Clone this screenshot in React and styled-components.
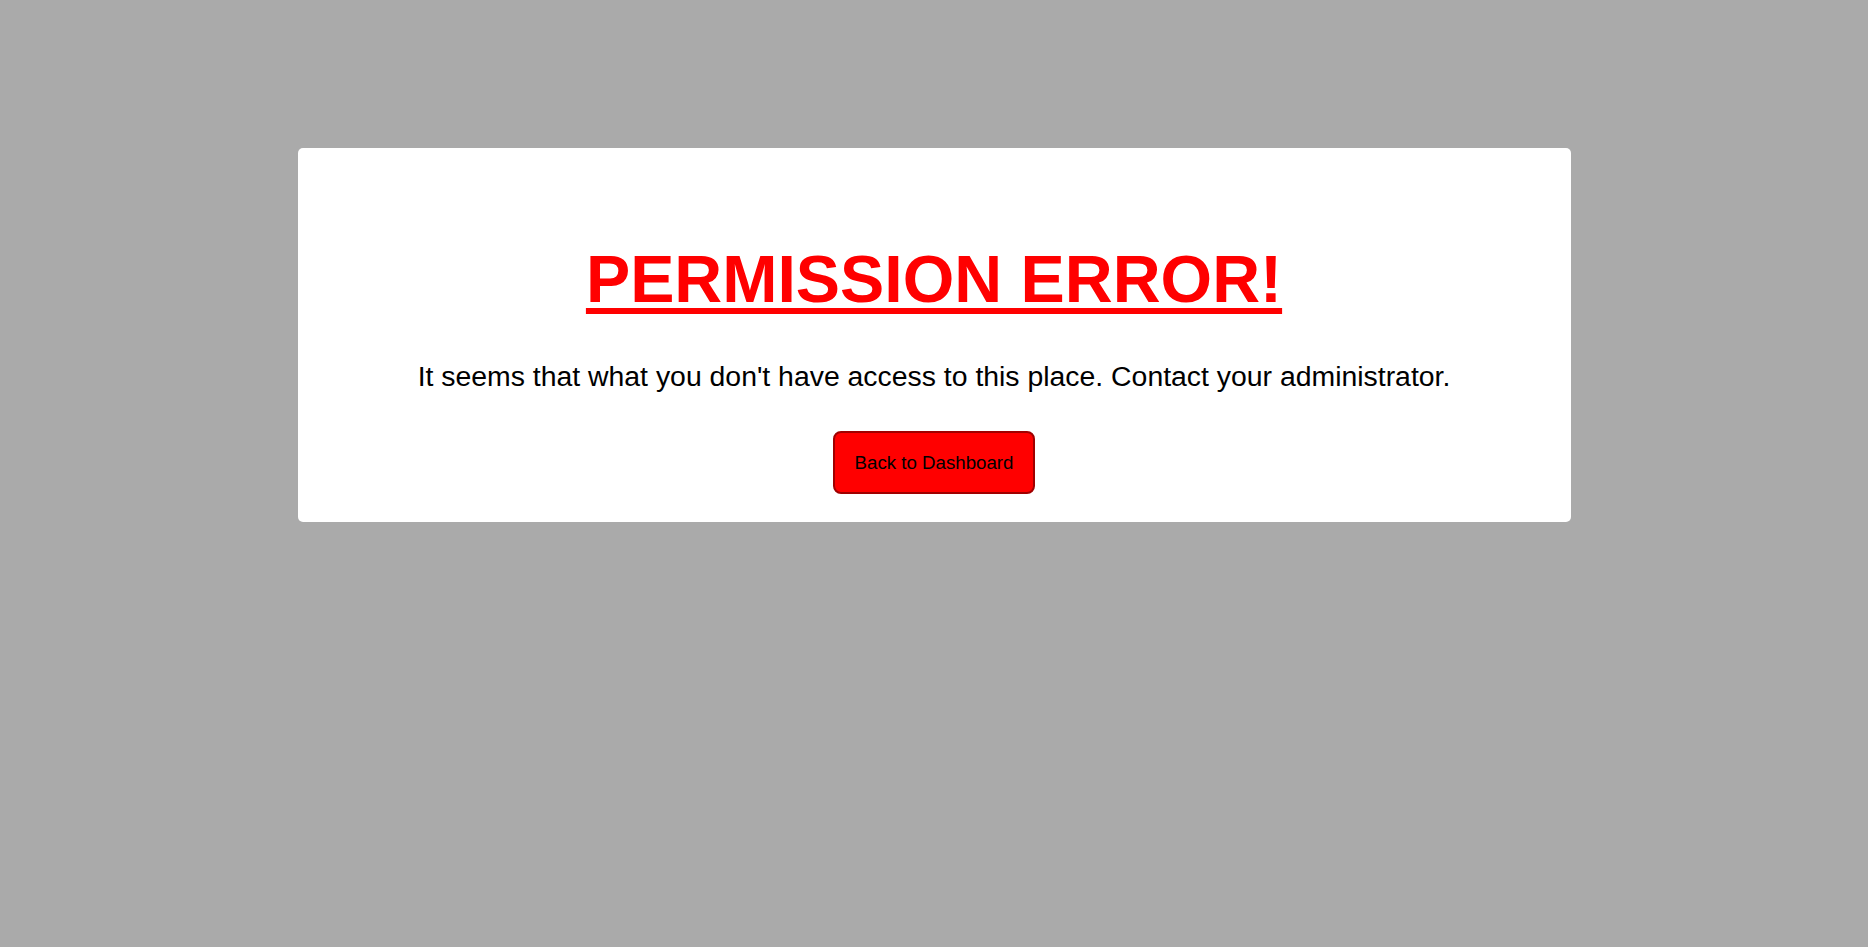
import React from 'react'
import styled, { createGlobalStyle } from 'styled-components'

const GlobalStyle = createGlobalStyle`
    html, body {
        margin: 0;
        padding: 0;
        background: #aaaaaa;
        font-family: 'Liberation Sans', Arial, sans-serif;
    }
`

const Page = styled.div`
    min-height: 100vh;
    display: flex;
    flex-direction: column;
    align-items: center;
    padding-top: 148px;
    box-sizing: border-box;
`

const Card = styled.div`
    width: 1273px;
    box-sizing: border-box;
    display: flex;
    flex-direction: column;
    align-items: center;
    padding: 93px 40px 28px;
    background-color: #ffffff;
    border-radius: 5px;
`

const Title = styled.h1`
    margin: 0;
    color: #ff0000;
    font-size: 66.3px;
    font-weight: 700;
    text-decoration: underline;
    text-decoration-thickness: 6px;
    text-underline-offset: 6px;
`

const Message = styled.p`
    margin: 43px 0 0;
    color: #000000;
    font-size: 28.4px;
`

const DashboardButton = styled.button`
    margin-top: 38px;
    padding: 18.5px 20px;
    font-family: 'Liberation Sans', Arial, sans-serif;
    font-size: 18.7px;
    color: #000000;
    background-color: #ff0000;
    border: 2px solid #a00000;
    border-radius: 8px;
    cursor: pointer;
`

const App = () => {
    return (
        <>
            <GlobalStyle />
            <Page>
                <Card>
                    <Title>PERMISSION ERROR!</Title>
                    <Message>
                        It seems that what you don't have access to this place.
                        Contact your administrator.
                    </Message>
                    <DashboardButton>Back to Dashboard</DashboardButton>
                </Card>
            </Page>
        </>
    )
}

export default App
